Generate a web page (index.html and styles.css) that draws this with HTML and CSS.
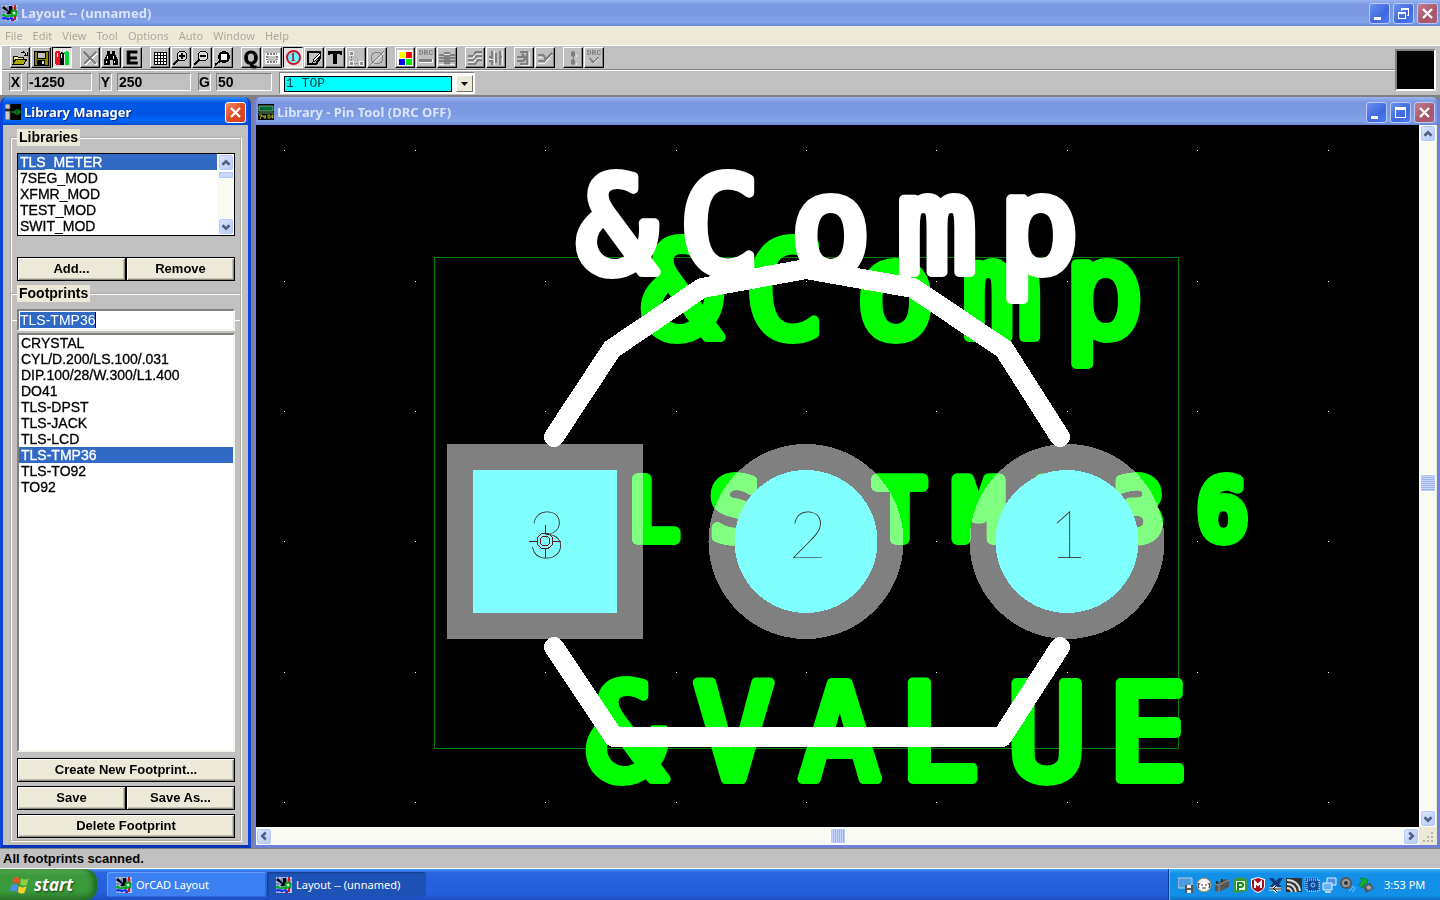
FILE: index.html
```html
<!DOCTYPE html>
<html lang="en">
<head>
<meta charset="utf-8">
<title>Layout -- (unnamed)</title>
<link rel="stylesheet" href="styles.css">
</head>
<body>
<svg class="defs" aria-hidden="true">
  <symbol id="app" viewBox="0 0 16 16">
    <rect width="16" height="16" fill="#b8c4e8"/>
    <path d="M2 0v16M6 0v16M10 0v16M0 3h16M0 7h16M0 11h16" stroke="#6070b0"/>
    <path d="M0 3l2-2 5 5V1h3l1 8H4l2-2z" fill="#000"/>
    <path d="M13 0v5M11 6h4M13 9v6M9 15h3" stroke="#e01010" stroke-width="2"/>
    <path d="M0 10c4-1 3 3 6 1s3 2 5-1" stroke="#00b020" stroke-width="2" fill="none"/>
    <circle cx="12" cy="8" r="2.500" stroke="#00a020" stroke-width="2" fill="#cfc"/>
    <path d="M0 14c3-3 5 2 9-1l3 2" stroke="#1030ff" stroke-width="2" fill="none"/>
  </symbol>
  <symbol id="up" viewBox="0 0 16 16"><path d="M4 10l4-4 4 4" fill="none" stroke="#4d6185" stroke-width="3"/></symbol>
  <symbol id="down" viewBox="0 0 16 16"><path d="M4 6l4 4 4-4" fill="none" stroke="#4d6185" stroke-width="3"/></symbol>
  <symbol id="left" viewBox="0 0 16 16"><path d="M10 4L6 8l4 4" fill="none" stroke="#4d6185" stroke-width="3"/></symbol>
  <symbol id="right" viewBox="0 0 16 16"><path d="M6 4l4 4-4 4" fill="none" stroke="#4d6185" stroke-width="3"/></symbol>
  <symbol id="min" viewBox="0 0 19 19"><path d="M4 13h7v3H4z" fill="#fff"/></symbol>
  <symbol id="max" viewBox="0 0 19 19"><path d="M4 4h11v11H4zM5 7v7h9V7z" fill="#fff" fill-rule="evenodd"/></symbol>
  <symbol id="restore" viewBox="0 0 19 19"><path d="M7 4h8v8h-2v-1h1V6H8v1H7zM4 8h8v7H4zM5 10v4h6v-4z" fill="#fff" fill-rule="evenodd"/></symbol>
  <symbol id="close" viewBox="0 0 19 19"><path d="M5 5l9 9M14 5l-9 9" stroke="#fff" stroke-width="2.400"/></symbol>
</svg>

<header class="titlebar main-title">
  <svg class="ic16"><use href="#app"/></svg>
  <h1>Layout -- (unnamed)</h1>
  <button class="wb" aria-label="Minimize"><svg><use href="#min"/></svg></button>
  <button class="wb" aria-label="Restore"><svg><use href="#restore"/></svg></button>
  <button class="wb red" aria-label="Close"><svg><use href="#close"/></svg></button>
</header>

<nav class="menu">
  <button>File</button><button>Edit</button><button>View</button><button>Tool</button><button>Options</button><button>Auto</button><button>Window</button><button>Help</button>
</nav>

<section class="toolbar">
  <div class="rows">
    <div class="tools">
      <div class="group">
        <button aria-label="Open"><svg viewBox="0 0 16 16"><path d="M1 13V6h4l1 1h5v2" fill="#ff8" stroke="#000"/><path d="M1 14l3-5h11l-3 5z" fill="#aa0" stroke="#000"/><path d="M9 3c2-2 4-1 5 2M12 5h3V2" fill="none" stroke="#000"/></svg></button>
        <button aria-label="Save"><svg viewBox="0 0 16 16"><path d="M1 1h14v14H1z" fill="#880" stroke="#000"/><path d="M4 2h8v6H4z" fill="#c0c0c0" stroke="#000"/><path d="M4 10h8v5H4z" fill="#000"/><path d="M9 11h2v3H9z" fill="#ddd"/></svg></button>
        <button class="on" aria-label="Library manager"><svg viewBox="0 0 16 16"><path d="M1 2l2-1h3v14H3l-2-1z" fill="#f01020"/><path d="M3 3h1v4H3z" fill="#fff"/><path d="M6 3l2-1 2 2v11H6z" fill="#000"/><path d="M7 4h1v4H7z" fill="#fff"/><path d="M10 2l3-1 2 1v13h-4V4h-1z" fill="#00d838"/></svg></button>
      </div>
      <div class="group">
        <button aria-label="Delete"><svg viewBox="0 0 16 16"><path d="M3 3l12 12M15 3L3 15" stroke="#fff" stroke-width="2"/><path d="M2 2l12 12M14 2L2 14" stroke="#808080" stroke-width="2"/></svg></button>
        <button aria-label="Find"><svg viewBox="0 0 16 16"><path d="M4 1h3v3h2V1h3v3l3 6v5h-5v-5H7v5H1v-5l3-6z"/><path d="M4 6v3M10 6v3M3 11v2M11 11v2" stroke="#fff"/></svg></button>
        <button aria-label="Edit" class="letter">E</button>
      </div>
      <div class="group">
        <button aria-label="View spreadsheet"><svg viewBox="0 0 16 16"><path d="M2 2h13v13H2z" fill="#fff"/><path d="M2 2.500h13M2 5.500h13M2 8.500h13M2 11.500h13M2 14.500h13M2.500 2v13M5.500 2v13M8.500 2v13M11.500 2v13M14.500 2v13" stroke="#000"/></svg></button>
        <button aria-label="Zoom in"><svg viewBox="0 0 16 16"><circle cx="9" cy="6" r="5" fill="#d8d8d8" stroke="#000"/><path d="M6 6h6M9 3v6" stroke="#000" stroke-width="2"/><path d="M5 10l-5 5" stroke="#000" stroke-width="2"/></svg></button>
        <button aria-label="Zoom out"><svg viewBox="0 0 16 16"><circle cx="9" cy="6" r="5" fill="#d8d8d8" stroke="#000"/><path d="M6 6h6" stroke="#000" stroke-width="2"/><path d="M5 10l-5 5" stroke="#000" stroke-width="2"/></svg></button>
        <button aria-label="Zoom all"><svg viewBox="0 0 16 16"><circle cx="9" cy="7" r="5.500" fill="#000" stroke="#000"/><path d="M6 4h6v6H6z" fill="#fff"/><path d="M5 11l-5 4" stroke="#000" stroke-width="2"/></svg></button>
      </div>
      <div class="group">
        <button aria-label="Query" class="letter">Q</button>
        <button aria-label="Component"><svg viewBox="0 0 16 16"><path d="M2 4h12v8H2z" fill="none" stroke="#fff" stroke-width="3"/><path d="M3 4h10M3 12h10M3 6v4M13 6v4" stroke="#808080" stroke-width="2" stroke-dasharray="2 1"/></svg></button>
        <button class="on pin" aria-label="Pin"><span>1</span></button>
        <button aria-label="Obstacle"><svg viewBox="0 0 16 16"><path d="M2 2h12v6l-4 6H2z" fill="none" stroke="#000" stroke-width="2"/><path d="M7 12l1-3 6-6 1 2-6 6z" fill="#fff" stroke="#000"/></svg></button>
        <button aria-label="Text"><svg viewBox="0 0 16 16"><path d="M1 1h14v4h-2V4h-3v10H6V4H3v1H1z"/></svg></button>
        <button aria-label="Connection"><svg viewBox="0 0 16 16"><path d="M3 3v10h10L4 4" fill="none" stroke="#808080" stroke-dasharray="2 1"/><path d="M1 1h4v4H1zM1 11h4v4H1zM11 11h4v4h-4z" fill="#909090" stroke="#eee"/></svg></button>
        <button aria-label="Error"><svg viewBox="0 0 16 16"><circle cx="8" cy="8" r="6" fill="none" stroke="#808080"/><path d="M1 15L15 1" stroke="#808080"/><path d="M3 15L15 3" stroke="#eee"/></svg></button>
      </div>
      <div class="group">
        <button aria-label="Color"><svg viewBox="0 0 16 16"><path d="M0 0h16v16H0z" fill="#fff"/><path d="M2 2h6v6H2z" fill="#ff0"/><path d="M9 2h6v6H9z" fill="#f00"/><path d="M2 9h6v6H2z" fill="#00f"/><path d="M9 9h6v6H9z" fill="#0e0"/></svg></button>
        <button aria-label="Online DRC" class="drc"><span>DRC</span><svg viewBox="0 0 16 6"><path d="M1 1h14v4H1z" fill="#fff"/><path d="M1 1h13v3H1z" fill="#808080"/></svg></button>
        <button aria-label="Reconnect"><svg viewBox="0 0 16 16"><path d="M5 2h6v12H5z" fill="#808080"/><path d="M0 5h5M0 8h5M0 11h5M11 5h5M11 8h5M11 11h5" stroke="#808080" stroke-width="2"/><path d="M0 14h5M11 14h5M5 4h6" stroke="#eee"/></svg></button>
      </div>
      <div class="group">
        <button aria-label="Auto route"><svg viewBox="0 0 16 16"><path d="M1 6h5l3-4h6M1 10h6l3-4h5M1 14h7l3-4h4" fill="none" stroke="#808080" stroke-width="2"/><path d="M1 8h5l3-4h6M1 12h6l3-4h5" fill="none" stroke="#e8e8e8"/></svg></button>
        <button aria-label="Shove"><svg viewBox="0 0 16 16"><path d="M4 1v14M12 1v14M8 3v10M1 7h4M11 7h4M1 11h4" stroke="#808080" stroke-width="2"/><path d="M6 1v14M14 1v14M1 9h4" stroke="#eee"/></svg></button>
      </div>
      <div class="group">
        <button aria-label="Edit segment"><svg viewBox="0 0 16 16"><path d="M4 2h7v12H4M1 7h7M1 11h7M6 4l4 4-4 4" fill="none" stroke="#808080" stroke-width="2"/><path d="M13 2v13H5" fill="none" stroke="#eee"/></svg></button>
        <button aria-label="Add route"><svg viewBox="0 0 16 16"><path d="M1 5h5l3 4M1 11h6l8-8" fill="none" stroke="#808080" stroke-width="2"/><path d="M1 13h7l7-8M1 7h4" fill="none" stroke="#eee"/></svg></button>
      </div>
      <div class="group">
        <button aria-label="Refresh"><svg viewBox="0 0 16 16"><path d="M8 1l2 3-2 3-2-3zM8 9l2 3-2 3-2-3zM8 6v4" fill="#808080" stroke="#808080"/><path d="M11 5v2M11 13v2" stroke="#eee"/></svg></button>
        <button aria-label="Design rule check" class="drc"><span>DRC</span><svg viewBox="0 0 16 8"><path d="M4 2l4 4 7-8" fill="none" stroke="#eee" stroke-width="2"/><path d="M3 1l4 5 7-7" fill="none" stroke="#808080" stroke-width="2"/></svg></button>
      </div>
    </div>
    <div class="fields">
      <label for="fx">X</label><input id="fx" class="w64" value="-1250">
      <label for="fy">Y</label><input id="fy" class="w73" value="250">
      <label for="fg">G</label><input id="fg" class="w55" value="50">
      <div class="combo">
        <select aria-label="Layer"><option>1 TOP</option></select>
        <button aria-label="Show layers"><svg viewBox="0 0 7 4"><path d="M0 0h7L3.500 4z"/></svg></button>
      </div>
    </div>
  </div>
  <div class="preview"></div>
</section>

<main class="workspace">
  <section class="win manager">
    <header class="titlebar">
      <svg class="ic16" viewBox="0 0 16 16"><path d="M0 0h16v16H0z"/><path d="M0 0h5v5H0zM0 7h5v9H0z" fill="#ccc" stroke="#555"/><path d="M6 8h3l2-2h3v4h-3L9 8h7" fill="none" stroke="#0a2"/></svg>
      <h2>Library Manager</h2>
      <button class="wb red" aria-label="Close"><svg><use href="#close"/></svg></button>
    </header>
    <div class="panel">
      <fieldset>
        <legend>Libraries</legend>
        <div class="libs">
          <ul role="listbox" aria-label="Libraries">
            <li class="sel" role="option">TLS_METER</li><li role="option">7SEG_MOD</li><li role="option">XFMR_MOD</li><li role="option">TEST_MOD</li><li role="option">SWIT_MOD</li>
          </ul>
          <div class="vbar"><button aria-label="Scroll up"><svg><use href="#up"/></svg></button><i class="thumb small"></i><button class="end" aria-label="Scroll down"><svg><use href="#down"/></svg></button></div>
        </div>
        <div class="pair"><button class="cmd">Add...</button><button class="cmd">Remove</button></div>
      </fieldset>
      <fieldset class="grow">
        <legend>Footprints</legend>
        <div class="name"><input aria-label="Footprint name" value="TLS-TMP36" size="8"></div>
        <ul class="prints" role="listbox" aria-label="Footprints">
          <li role="option">CRYSTAL</li><li role="option">CYL/D.200/LS.100/.031</li><li role="option">DIP.100/28/W.300/L1.400</li><li role="option">DO41</li><li role="option">TLS-DPST</li><li role="option">TLS-JACK</li><li role="option">TLS-LCD</li><li class="sel" role="option">TLS-TMP36</li><li role="option">TLS-TO92</li><li role="option">TO92</li>
        </ul>
        <div class="stack">
          <button class="cmd">Create New Footprint...</button>
          <div class="pair"><button class="cmd">Save</button><button class="cmd">Save As...</button></div>
          <button class="cmd">Delete Footprint</button>
        </div>
      </fieldset>
    </div>
  </section>

  <section class="win editor">
    <header class="titlebar">
      <svg class="ic16" viewBox="0 0 16 16"><path d="M0 0h16v16H0z"/><path d="M1 2h14v5H1z" fill="#063" stroke="#7a7"/><path d="M0 9h16" stroke="#696"/><path d="M1 11h3l-2 4M7 11v4M5 11v2h3M10 11h2v3h-2zM14 11h1v3h-1z" fill="none" stroke="#bb2"/></svg>
      <h2>Library - Pin Tool (DRC OFF)</h2>
      <button class="wb" aria-label="Minimize"><svg><use href="#min"/></svg></button>
      <button class="wb" aria-label="Maximize"><svg><use href="#max"/></svg></button>
      <button class="wb red" aria-label="Close"><svg><use href="#close"/></svg></button>
    </header>
    <div class="view">
      <svg class="board" viewBox="256 125 1163 702" preserveAspectRatio="xMinYMin slice">
        <defs>
          <path id="dots" d="M284 0h1M415 0h1M545 0h1M676 0h1M806 0h1M936 0h1M1067 0h1M1197 0h1M1328 0h1" stroke="#fff"/>
        </defs>
        <use href="#dots" y="150.500"/><use href="#dots" y="281.500"/><use href="#dots" y="411.500"/><use href="#dots" y="541.500"/><use href="#dots" y="672.500"/><use href="#dots" y="802.500"/>
        <rect class="outline" x="434.500" y="257.500" width="744" height="491"/>
        <text class="big green" y="337" x="642 745 856 962 1064">&amp;Comp</text>
        <text class="mid green" y="539" x="553 629 711 793 875 954 1033 1114 1198">TLS-TMP36</text>
        <text class="big green" y="779" x="587 694 800 899 1007 1108">&amp;VALUE</text>
        <text class="big white" y="272" x="577 680 791 897 999">&amp;Comp</text>
        <g class="pads">
          <rect x="447" y="444" width="196" height="195" fill="#808080"/>
          <circle cx="806" cy="541.500" r="97.500" fill="#808080"/>
          <circle cx="1067" cy="541.500" r="97.500" fill="#808080"/>
          <rect x="473" y="470" width="144" height="143" fill="#80ffff"/>
          <circle cx="806" cy="541.500" r="71.500" fill="#80ffff"/>
          <circle cx="1067" cy="541.500" r="71.500" fill="#80ffff"/>
        </g>
        <text class="num" x="547" y="558">3</text><text class="num" x="808" y="558">2</text><text class="num" x="1068" y="558">1</text>
        <path d="M529 541.500h8M553 541.500h8M545.500 525v8M545.500 549v9" class="cross"/>
        <circle cx="545" cy="541" r="8" class="cross"/><circle cx="545" cy="541" r="5" class="cross"/>
        <path class="silk" d="M554 437L612 349 702 288 806 269 913 288 1004 349 1060 437M554 647L614 737H1002L1060 647"/>
      </svg>
      <div class="vbar"><button aria-label="Scroll up"><svg><use href="#up"/></svg></button><i class="thumb"></i><button aria-label="Scroll down"><svg><use href="#down"/></svg></button></div>
      <div class="hbar"><button aria-label="Scroll left"><svg><use href="#left"/></svg></button><i class="thumb"></i><button aria-label="Scroll right"><svg><use href="#right"/></svg></button></div>
      <svg class="grip" viewBox="0 0 17 17"><path d="M12 5h2v2h-2zM8 9h2v2H8zM12 9h2v2h-2zM4 13h2v2H4zM8 13h2v2H8zM12 13h2v2h-2z" fill="#b8b4a2"/></svg>
    </div>
  </section>
</main>

<div class="status">All footprints scanned.</div>

<footer class="taskbar">
  <button class="start"><svg viewBox="0 0 18 18"><path d="M3 3c2-2 4-1 6 0L8 8C6 7 4 6 2 8z" fill="#e8542a"/><path d="M10 3c2 1 4 2 7 0l-2 6c-2 1-4 1-6-1z" fill="#8bd048"/><path d="M1 9c2-1 4-1 6 0l-1 6c-2-1-4-1-6 0z" fill="#4c8df0"/><path d="M8 10c2 1 4 2 7 0l-2 6c-2 1-4 1-6-1z" fill="#fcd030"/></svg>start</button>
  <button class="task"><svg class="ic16"><use href="#app"/></svg>OrCAD Layout</button>
  <button class="task active"><svg class="ic16"><use href="#app"/></svg>Layout -- (unnamed)</button>
  <div class="tray">
    <svg viewBox="0 0 16 16"><path d="M0 1h14v10H0z" fill="#4a9be0" stroke="#bcd"/><path d="M7 8h8v8H7z" fill="#555"/><path d="M9 8h4v3H9zM9 13h4v3H9z" fill="#eee"/></svg>
    <svg viewBox="0 0 16 16"><circle cx="8" cy="8" r="7" fill="#eee" stroke="#885"/><path d="M2 6h12v5H2z" fill="#555"/><ellipse cx="8" cy="9" rx="5" ry="4" fill="#fff"/><path d="M5 8h2M9 8h2M6 11h4" stroke="#333"/></svg>
    <svg viewBox="0 0 16 16"><path d="M1 7l10-5 4 1v7L5 15l-4-1z" fill="#555"/><path d="M1 7l4 1 10-5M5 8v7" stroke="#999" fill="none"/><path d="M3 4v3M8 2v3" stroke="#333" stroke-width="2"/></svg>
    <svg viewBox="0 0 16 16"><path d="M1 3l5-3 9 2v12l-13 2z" fill="#3a9a3a"/><path d="M4 4h9v9H4z" fill="#e8ffe8"/><path d="M6 13V6h3a2 2 0 010 4H6" fill="none" stroke="#178a17" stroke-width="2"/></svg>
    <svg viewBox="0 0 16 16"><path d="M1 2l7-2 7 2v7c0 3-4 6-7 7-3-1-7-4-7-7z" fill="#fff"/><path d="M2 3l6-2 6 2v6c0 3-3 5-6 6-3-1-6-3-6-6z" fill="#a01020"/><path d="M5 11V5l3 3 3-3v6" fill="none" stroke="#fff" stroke-width="2"/></svg>
    <svg viewBox="0 0 16 16"><path d="M1 1h4l3 3 3-3h4l-4 6 3 3H2l3-4z" fill="#123a7a"/><path d="M1 12h12M5 12l3-3M6 12l3 3" stroke="#fff" stroke-width="3"/><path d="M1 12h12M5 12l3-3M6 12l3 3" stroke="#000"/></svg>
    <svg viewBox="0 0 16 16"><path d="M0 1h16v14H0z" fill="#333"/><path d="M1 3c7 0 12 4 13 11M1 7c5 0 8 3 9 8M1 11c3 0 4 1 5 4" stroke="#ddd" stroke-width="2" fill="none"/></svg>
    <svg viewBox="0 0 16 16"><path d="M1 1h13v11H1z" fill="#125ab0" stroke="#9cf" stroke-dasharray="1 1"/><path d="M3 3h12v11H3z" fill="#0d4c9c" stroke="#fff" stroke-dasharray="1 1"/><circle cx="9" cy="8" r="2" fill="none" stroke="#8cf"/></svg>
    <svg viewBox="0 0 16 16"><path d="M5 1h9v7H5z" fill="#4a8fe0" stroke="#def"/><path d="M1 6h9v7H1z" fill="#68b0f4" stroke="#def"/><path d="M3 15h6" stroke="#bcd" stroke-width="2"/></svg>
    <svg viewBox="0 0 16 16"><circle cx="6" cy="6" r="5" fill="#999" stroke="#555" stroke-width="2"/><circle cx="6" cy="6" r="2" fill="#333"/><path d="M9 14c2-1 4-3 4-5M12 15c2-1 3-3 3-5" stroke="#8cf" fill="none"/></svg>
    <svg viewBox="0 0 16 16"><path d="M5 9l7-3 4 5-8 5z" fill="#555"/><path d="M8 10l3-2 3 3-4 2z" fill="#aaa"/><path d="M2 1l7 1 1 5-3-1-3 5-3-3 3-4z" fill="#1cb01c" stroke="#085"/></svg>
    <time>3:53 PM</time>
  </div>
</footer>
</body>
</html>
```
FILE: styles.css
```css
* { box-sizing: border-box; }
html, body { height: 100%; }
body {
  margin: 0;
  display: flex;
  flex-direction: column;
  overflow: hidden;
  background: #808080;
  color: #000;
  font: bold 13px/16px "Liberation Sans", Arial, sans-serif;
}
button, input, select { font: inherit; color: inherit; margin: 0; padding: 0; border: 0; border-radius: 0; }
h1, h2, ul { margin: 0; padding: 0; list-style: none; }
svg { display: block; flex: none; }
.defs { position: absolute; width: 0; height: 0; }
.ic16 { width: 16px; height: 16px; }

/* title bars */
.titlebar {
  display: flex;
  align-items: center;
  gap: 2px;
  height: 28px;
  flex: none;
  padding: 2px 2px 0;
  color: #d8e4f8;
  background: linear-gradient(#96b4f0, #7a97df 20%, #7c9ae2 60%, #82a5ea 85%, #6a86d2);
}
.titlebar h1, .titlebar h2 {
  flex: 1;
  margin-left: 1px;
  font: bold 13px/18px "Noto Sans", sans-serif;
  white-space: nowrap;
}
.main-title { height: 26px; padding-top: 0; }
.wb {
  width: 21px;
  height: 21px;
  border: 1px solid #b9cbf5;
  border-radius: 3px;
  background: linear-gradient(135deg, #6a90ee, #3f68e0 60%, #4f7cf0);
}
.wb svg { width: 19px; height: 19px; }
.wb + .wb { margin-left: 1px; }
.wb.red { background: linear-gradient(135deg, #c08090, #a85468 60%, #b0607a); }

.menu { display: flex; flex: none; height: 19px; background: #ece9d8; padding-left: 5px; gap: 10px; }
.menu button { background: none; color: #aca899; font: 11px/18px "Noto Sans", sans-serif; }

/* toolbar */
.toolbar { display: flex; flex: none; height: 50px; background: #c0c0c0; border-top: 1px solid #fff; border-left: 2px solid #fff; }
.rows { flex: 1; display: flex; flex-direction: column; }
.tools { display: flex; gap: 8px; height: 24px; padding-left: 8px; border-bottom: 1px solid #808080; box-shadow: 0 1px #fff; }
.group { display: flex; gap: 1px; padding-top: 1px; }
.group button {
  width: 20px;
  height: 21px;
  display: flex;
  align-items: center;
  justify-content: center;
  background: #c0c0c0;
  border: 1px solid;
  border-color: #fff #000 #000 #fff;
  box-shadow: inset -1px -1px #808080;
}
.group svg { width: 16px; height: 16px; shape-rendering: crispEdges; }
.group .on { border-color: #000 #fff #fff #000; box-shadow: none; background: #e6e2e2; }
.group .letter { font: 900 18px/18px "Liberation Sans", sans-serif; -webkit-text-stroke: 1px #000; }
.pin span { width: 15px; height: 15px; border: 2px solid #d01020; border-radius: 50%; background: #6ff; color: #d01020; font: bold 12px/11px "Liberation Serif", serif; }
.group .drc { flex-direction: column; justify-content: flex-start; color: #808080; font: bold 8px/9px "Liberation Mono", monospace; }
.group .drc svg { height: 7px; }
.fields { flex: 1; display: flex; align-items: flex-start; padding: 3px 0 0 7px; font-size: 14px; }
.fields label, .fields input {
  height: 18px;
  line-height: 16px;
  background: #c0c0c0;
  border: 1px solid;
  border-color: #808080 #fff #fff #808080;
}
.fields label { width: 13px; margin-right: 5px; text-align: center; }
.fields input { margin-right: 7px; padding-left: 1px; }
.w64 { width: 65px; }
.w73 { width: 74px; }
.w55 { width: 56px; }
.combo { display: flex; width: 196px; height: 22px; margin-top: -1px; padding: 2px 1px 1px 4px; gap: 4px; background: #fff; border: 1px solid; border-color: #808080 #fff #fff #808080; }
.combo select { flex: 1; height: 16px; align-self: center; padding-left: 1px; appearance: none; background: #0ff; border: 1px solid #000; color: #043c3c; font: 13px/13px "Liberation Mono", monospace; }
.combo button { width: 17px; display: flex; align-items: center; justify-content: center; background: #ece9d8; border: 1px solid; border-color: #fff #716f64 #716f64 #fff; }
.combo svg { width: 7px; height: 4px; }
.preview { width: 41px; height: 42px; margin: 3px 4px 0 0; background: #000; border: 2px solid; border-color: #808080 #fff #fff #808080; }

/* child windows */
.workspace { flex: 1; min-height: 0; display: flex; gap: 2px; padding: 2px 0 0; }
.win { display: flex; flex-direction: column; border: solid #7180d4; border-width: 0 3px 3px; border-radius: 7px 7px 0 0; overflow: hidden; }
.manager { width: 251px; flex: none; border-color: #0a44dc; border-bottom-color: #0832b8; }
.manager .titlebar { color: #fff; background: linear-gradient(#3a90ff, #0058e8 20%, #0054e0 60%, #0066ff 85%, #0048c8); }
.manager h2 { text-shadow: 1px 1px #0a2a90; }
.manager .wb.red { background: linear-gradient(135deg, #f09070, #e04a20 50%, #d04020); border-color: #fff; }
.editor { flex: 1; min-width: 0; }

.panel { flex: 1; min-height: 0; display: flex; flex-direction: column; padding: 4px 6px 3px 7px; background: #c0c0c0; }
fieldset { margin: 0; padding: 7px 5px 13px; min-width: 0; border: 2px groove #fff; border-bottom: 0; }
fieldset.grow { flex: 1; min-height: 0; display: flex; flex-direction: column; margin-top: -9px; border-bottom: 2px groove #fff; padding-bottom: 2px; }
legend { padding: 0 2px; line-height: 17px; background: #ece9d8; font-size: 14px; }
.libs { display: flex; height: 83px; border: 1px solid #000; background: #fff; }
.libs ul { flex: 1; }
li { padding-left: 2px; height: 16px; font-size: 14px; font-weight: normal; -webkit-text-stroke: 0.3px; white-space: nowrap; }
.sel { background: #316ac5; color: #fff; }
.pair { display: flex; }
.libs + .pair { margin-top: 21px; }
.cmd { flex: 1; height: 24px; background: #ece9d8; border: 1px solid #000; box-shadow: inset 1px 1px #fff, inset -1px -1px #8a887c, inset -2px -2px #c5c2b4; }
.stack { display: flex; flex-direction: column; gap: 4px; margin-top: 6px; }
.stack > .cmd { flex: none; }
.name { position: relative; height: 22px; padding: 1px; background: #fff; border: 2px solid; border-color: #808080 #f4f2ea #f4f2ea #808080; }
.name::before, .name::after { content: ""; position: absolute; top: 9px; width: 5px; height: 1px; background: #fff; }
.name::before { left: -7px; }
.name::after { right: -7px; }
.name input { display: block; width: 76px; height: 16px; background: #316ac5; color: #fff; font-size: 14px; font-weight: normal; border-right: 1px solid #000; }
.prints { flex: 1; min-height: 0; margin-top: 2px; background: #fff; border: 2px solid; border-color: #808080 #f4f2ea #f4f2ea #808080; }

/* scroll bars */
.vbar, .hbar { display: flex; background: #fafaf5; justify-content: space-between; align-items: center; }
.vbar { flex-direction: column; width: 17px; }
.vbar button, .hbar button { width: 16px; height: 17px; background: linear-gradient(135deg, #dbe6fe, #b8cbf7); border: 1px solid #fff; border-radius: 3px; box-shadow: inset 0 0 0 1px #b4c8f6; }
.vbar svg, .hbar svg { width: 14px; height: 14px; }
.thumb { width: 16px; height: 18px; border: 2px solid #b4c8f6; border-radius: 2px; background: repeating-linear-gradient(#c9d8fc 0 1px, #9cb4ea 1px 2px); outline: 1px solid #fff; outline-offset: -1px; }
.view .vbar .thumb { margin-top: 14px; }
.hbar .thumb { background: repeating-linear-gradient(90deg, #c9d8fc 0 1px, #9cb4ea 1px 2px); height: 16px; }
.thumb.small { height: 8px; background: #c9d8fc; }
.small + .end { margin-top: auto; }

/* editor canvas */
.view { flex: 1; min-height: 0; display: grid; grid-template: minmax(0, 1fr) 18px / minmax(0, 1fr) 18px; background: #ece9d8; }
.board { width: 100%; height: 100%; background: #000; shape-rendering: crispEdges; }
.outline { fill: none; stroke: #008000; }
.big, .mid { font-family: "DejaVu Sans Mono", monospace; font-weight: normal; stroke-linejoin: round; }
.big { font-size: 132px; stroke-width: 10px; }
.mid { font-size: 82px; stroke-width: 12px; }
.green { fill: #0f0; stroke: #0f0; }
.white { fill: #fff; stroke: #fff; }
.pads * { mix-blend-mode: lighten; }
.num { font: 100 66px Lato, sans-serif; text-anchor: middle; fill: #301010; }
.cross { fill: none; stroke: #601818; }
.silk { fill: none; stroke: #fff; stroke-width: 20px; stroke-linecap: round; stroke-linejoin: round; }
.grip { width: 17px; height: 17px; }

.status { flex: none; height: 20px; padding: 1px 3px; margin-top: 1px; background: #c0c0c0; border-bottom: 1px solid #fff; line-height: 18px; }

/* taskbar */
.taskbar { flex: none; height: 31px; display: flex; align-items: center; background: linear-gradient(#4a94f4, #2a66e0 12%, #245edb 80%, #1c4cc0); color: #fff; font: 11px/16px "Noto Sans", sans-serif; }
.start { display: flex; align-items: center; gap: 4px; width: 97px; height: 31px; margin-right: 10px; padding-left: 10px; border-radius: 0 12px 12px 0; background: linear-gradient(#5fb45f, #3c9a3c 20%, #3a9a3a 70%, #2b7a2b); box-shadow: inset -4px 0 5px #226b22; font: italic bold 17px/24px "Open Sans", sans-serif; text-shadow: 1px 1px 2px #124012; }
.start svg { width: 20px; height: 20px; }
.task { display: flex; align-items: center; gap: 4px; width: 159px; height: 25px; padding-left: 9px; margin-right: 1px; border-radius: 3px; background: #3c81f3; box-shadow: inset 1px 1px #6aa2fa, inset -1px -1px #2f68d4; text-align: left; }
.task.active { background: #1e52b7; box-shadow: inset 1px 1px 2px #123a88; }
.tray { margin-left: auto; display: flex; align-items: center; gap: 2px; width: 272px; height: 31px; padding-left: 9px; border-left: 1px solid #0a3c98; box-shadow: inset 1px 0 #4cc0fa; background: linear-gradient(#38b0f6, #1290e8 15%, #1290e8 85%, #0d70c8); }
.tray svg { width: 16px; height: 16px; }
.tray time { margin-left: 8px; }
```
